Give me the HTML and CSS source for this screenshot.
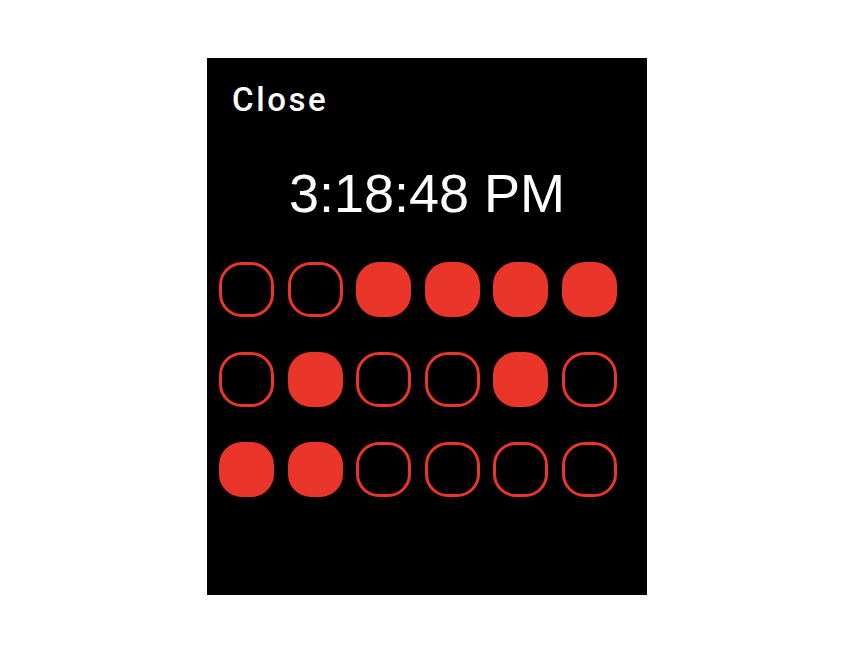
FILE: index.html
```html
<!DOCTYPE html>
<html>
<head>
<meta charset="utf-8">
<link rel="stylesheet" href="styles.css">
</head>
<body>
<div class="watch">
  <div class="close">Close</div>
  <div class="time">3:18:48 PM</div>
  <div class="grid">
    <div class="dot"></div><div class="dot"></div><div class="dot on"></div><div class="dot on"></div><div class="dot on"></div><div class="dot on"></div>
    <div class="dot"></div><div class="dot on"></div><div class="dot"></div><div class="dot"></div><div class="dot on"></div><div class="dot"></div>
    <div class="dot on"></div><div class="dot on"></div><div class="dot"></div><div class="dot"></div><div class="dot"></div><div class="dot"></div>
  </div>
</div>
</body>
</html>
```

FILE: styles.css
```css
html, body {
  margin: 0;
  padding: 0;
  background: #ffffff;
}
.watch {
  margin: 58px 0 0 207px;
  width: 440px;
  height: 537px;
  background: #000000;
  box-sizing: border-box;
  padding: 0 0 0 12px;
  display: flex;
  flex-direction: column;
}
.close {
  margin: 22px 0 0 13px;
  font-family: Roboto, "Noto Sans", sans-serif;
  font-weight: 500;
  font-size: 33px;
  line-height: 40px;
  letter-spacing: 2.6px;
  color: #ffffff;
}
.time {
  margin: 43px 0 0 0;
  width: 416px;
  text-align: center;
  font-family: "Liberation Sans", Arial, sans-serif;
  font-size: 54px;
  line-height: 60px;
  color: #ffffff;
}
.grid {
  margin-top: 39px;
  display: grid;
  grid-template-columns: repeat(6, 55px);
  column-gap: 13.5px;
  row-gap: 35px;
}
.dot {
  width: 55px;
  height: 55px;
  box-sizing: border-box;
  border: 3px solid #e9352a;
  border-radius: 23px;
}
.dot.on {
  background: #e9352a;
}
```
